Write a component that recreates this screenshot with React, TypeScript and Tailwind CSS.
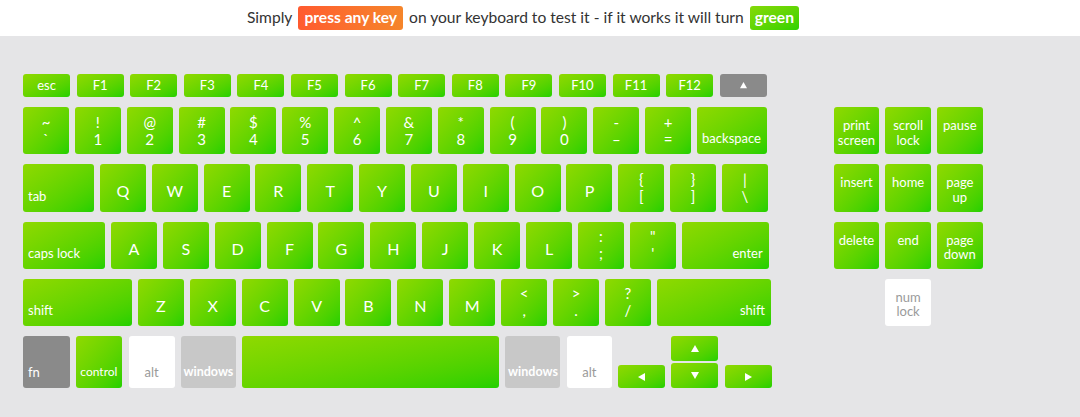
import React from "react";

type Variant = "green" | "dark" | "light" | "white";
type Align = "center" | "bl" | "br" | "top" | "bc" | "double";

const variantCls: Record<Variant, string> = {
  green: "bg-linear-to-br from-[#8fd900] to-[#20d000] text-white",
  dark: "bg-[#8a8a8a] text-white",
  light: "bg-[#c8c8c8] text-white",
  white: "bg-white text-[#9a9a9a]",
};

const alignCls: Record<Align, string> = {
  center: "items-center justify-center text-[16px] pt-[7px]",
  double: "flex-col items-center justify-center text-[15px] leading-[17px]",
  bl: "items-end justify-start pl-[5px] pb-[8px] text-[13px] leading-[16px]",
  br: "items-end justify-end pr-[6px] pb-[8px] text-[13px] leading-[16px]",
  top: "flex-col items-center justify-start pt-[11px] text-[13px] leading-[14.5px] text-center",
  bc: "items-end justify-center pb-[8px] text-[13px] leading-[16px]",
};

function Key({
  w,
  h = "h-[47.25px]",
  v = "green",
  a = "center",
  children,
}: {
  w: string;
  h?: string;
  v?: Variant;
  a?: Align;
  children?: React.ReactNode;
}) {
  return (
    <div
      className={`${w} ${h} ${variantCls[v]} ${alignCls[a]} flex shrink-0 rounded-[3px] whitespace-nowrap`}
    >
      {children}
    </div>
  );
}

function FKey({ children, v = "green" }: { children: React.ReactNode; v?: Variant }) {
  return (
    <div
      className={`w-[47px] h-[23px] ${variantCls[v]} flex items-center justify-center rounded-[3px] text-[13px] shrink-0`}
    >
      {children}
    </div>
  );
}

function Tri({ dir, s = 8 }: { dir: "up" | "down" | "left" | "right"; s?: number }) {
  const pts: Record<string, string> = {
    up: "4,0 8,7 0,7",
    down: "0,0 8,0 4,7",
    left: "7,0 7,8 0,4",
    right: "0,0 7,4 0,8",
  };
  const vert = dir === "up" || dir === "down";
  const vb = vert ? "0 0 8 7" : "0 0 7 8";
  const wd = vert ? s : (s * 7) / 8;
  const ht = vert ? (s * 7) / 8 : s;
  return (
    <svg width={wd} height={ht} viewBox={vb}>
      <polygon points={pts[dir]} fill="white" />
    </svg>
  );
}

function Dbl({ t, b }: { t: string; b: string }) {
  return (
    <Key w="w-[46px]" a="double">
      <span>{t}</span>
      <span>{b}</span>
    </Key>
  );
}

function L({ c }: { c: string }) {
  return <Key w="w-[46px]">{c}</Key>;
}

export default function App() {
  const font = { fontFamily: "Lato, 'Open Sans', sans-serif" };
  return (
    <div className="w-[1080px] h-[417px] overflow-hidden bg-[#e5e5e7]" style={font}>
      <div className="h-[36px] bg-white flex items-center justify-center pr-[34px] text-[15.6px] text-[#333]">
        <span>Simply</span>
        <span className="mx-[6px] px-[6px] h-[24px] flex items-center rounded-[3px] bg-linear-to-r from-[#ff5a2f] to-[#f5852a] text-white font-bold">
          press any key
        </span>
        <span>on your keyboard to test it - if it works it will turn</span>
        <span className="ml-[6px] px-[5px] h-[24px] flex items-center rounded-[3px] bg-linear-to-br from-[#84d909] to-[#2ad200] text-white font-bold">
          green
        </span>
      </div>

      <div className="flex pl-[23px] pt-[38px]">
        <div className="flex flex-col gap-[10px]">
          <div className="flex gap-[6.6px]">
            <FKey>esc</FKey>
            {["F1", "F2", "F3", "F4", "F5", "F6", "F7", "F8", "F9", "F10", "F11", "F12"].map((f) => (
              <FKey key={f}>{f}</FKey>
            ))}
            <FKey v="dark">
              <Tri dir="up" s={7} />
            </FKey>
          </div>

          <div className="flex gap-[5.85px]">
            <Dbl t="~" b="`" />
            <Dbl t="!" b="1" />
            <Dbl t="@" b="2" />
            <Dbl t="#" b="3" />
            <Dbl t="$" b="4" />
            <Dbl t="%" b="5" />
            <Dbl t="^" b="6" />
            <Dbl t="&" b="7" />
            <Dbl t="*" b="8" />
            <Dbl t="(" b="9" />
            <Dbl t=")" b="0" />
            <Dbl t="-" b="–" />
            <Dbl t="+" b="=" />
            <Key w="w-[70px]" a="br">backspace</Key>
          </div>

          <div className="flex gap-[5.85px]">
            <Key w="w-[71px]" a="bl">tab</Key>
            {"QWERTYUIOP".split("").map((c) => (
              <L key={c} c={c} />
            ))}
            <Dbl t="{" b="[" />
            <Dbl t="}" b="]" />
            <Dbl t="|" b="\" />
          </div>

          <div className="flex gap-[5.9px]">
            <Key w="w-[82px]" a="bl">caps lock</Key>
            {"ASDFGHJKL".split("").map((c) => (
              <L key={c} c={c} />
            ))}
            <Dbl t=":" b=";" />
            <Dbl t={'"'} b="'" />
            <Key w="w-[87px]" a="br">enter</Key>
          </div>

          <div className="flex gap-[5.9px]">
            <Key w="w-[109px]" a="bl">shift</Key>
            {"ZXCVBNM".split("").map((c) => (
              <L key={c} c={c} />
            ))}
            <Dbl t="<" b="," />
            <Dbl t=">" b="." />
            <Dbl t="?" b="/" />
            <Key w="w-[114px]" a="br">shift</Key>
          </div>

          <div className="flex gap-[6.3px] items-end">
            <Key w="w-[47px]" h="h-[52px]" v="dark" a="bl">fn</Key>
            <Key w="w-[46px]" h="h-[52px]" a="bl">
              <span className="text-[12px] -ml-[1px]">control</span>
            </Key>
            <Key w="w-[46px]" h="h-[52px]" v="white" a="bc">alt</Key>
            <Key w="w-[55px]" h="h-[52px]" v="light" a="bc">
              <span className="font-bold text-[12.5px]">windows</span>
            </Key>
            <Key w="w-[257px]" h="h-[52px]" />
            <Key w="w-[55px]" h="h-[52px]" v="light" a="bc">
              <span className="font-bold text-[12.5px]">windows</span>
            </Key>
            <Key w="w-[45px]" h="h-[52px]" v="white" a="bc">alt</Key>
            <Key w="w-[47px]" h="h-[23px]">
              <span className="-mt-[7px] flex"><Tri dir="left" /></span>
            </Key>
            <div className="flex flex-col gap-[2px]">
              <Key w="w-[47px]" h="h-[25px]">
                <span className="-mt-[7px] flex"><Tri dir="up" /></span>
              </Key>
              <Key w="w-[47px]" h="h-[25px]">
                <span className="-mt-[7px] flex"><Tri dir="down" /></span>
              </Key>
            </div>
            <Key w="w-[47px]" h="h-[23px]">
              <span className="-mt-[7px] flex"><Tri dir="right" /></span>
            </Key>
          </div>
        </div>

        <div className="ml-[62px] mt-[33px] grid grid-cols-[repeat(3,45.5px)] gap-x-[6.2px] gap-y-[10px] auto-rows-[47.25px] self-start">
          <Key w="w-[45.5px]" a="top">
            <span>print</span>
            <span>screen</span>
          </Key>
          <Key w="w-[45.5px]" a="top">
            <span>scroll</span>
            <span>lock</span>
          </Key>
          <Key w="w-[45.5px]" a="top">pause</Key>
          <Key w="w-[45.5px]" a="top">insert</Key>
          <Key w="w-[45.5px]" a="top">home</Key>
          <Key w="w-[45.5px]" a="top">
            <span>page</span>
            <span>up</span>
          </Key>
          <Key w="w-[45.5px]" a="top">delete</Key>
          <Key w="w-[45.5px]" a="top">end</Key>
          <Key w="w-[45.5px]" a="top">
            <span>page</span>
            <span>down</span>
          </Key>
          <div />
          <Key w="w-[45.5px]" v="white" a="top">
            <span>num</span>
            <span>lock</span>
          </Key>
        </div>
      </div>
    </div>
  );
}
